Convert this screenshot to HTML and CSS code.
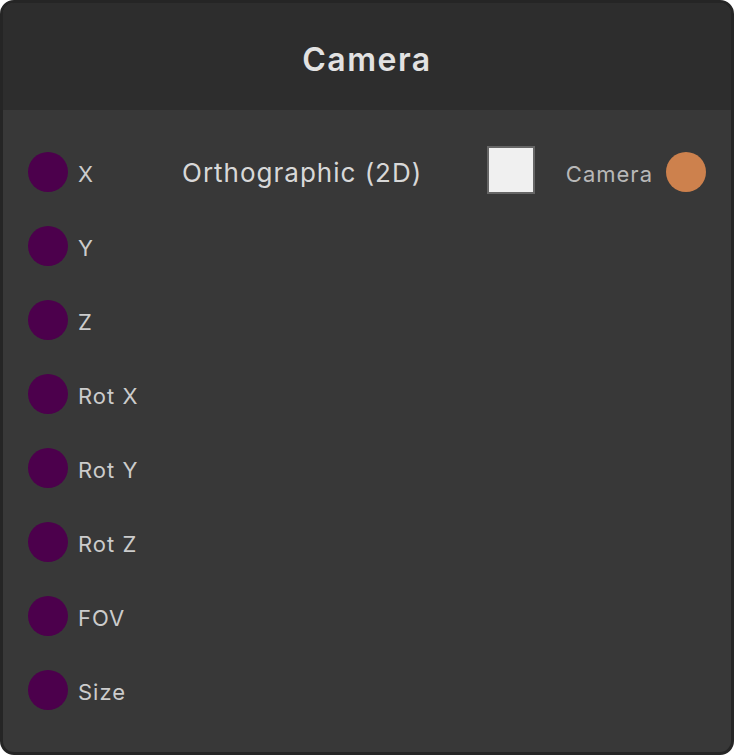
FILE: index.html
```html
<!DOCTYPE html>
<html lang="en">
<head>
    <meta charset="UTF-8">
    <meta name="viewport" content="width=device-width, initial-scale=1.0">
    <title>Camera Node</title>
    <link rel="stylesheet" href="styles.css">
</head>
<body>
    <div class="node">
        <div class="node-header">Camera</div>

        <div class="node-body">
            <div class="node-row">
                <div class="socket-in">
                    <span class="socket socket-float"></span>
                    <span class="socket-label">X</span>
                </div>
                <div class="node-property">
                    <span class="property-label">Orthographic (2D)</span>
                    <span class="checkbox"></span>
                </div>
                <div class="socket-out">
                    <span class="socket-label socket-label-out">Camera</span>
                    <span class="socket socket-camera"></span>
                </div>
            </div>

            <div class="node-row">
                <div class="socket-in">
                    <span class="socket socket-float"></span>
                    <span class="socket-label">Y</span>
                </div>
            </div>

            <div class="node-row">
                <div class="socket-in">
                    <span class="socket socket-float"></span>
                    <span class="socket-label">Z</span>
                </div>
            </div>

            <div class="node-row">
                <div class="socket-in">
                    <span class="socket socket-float"></span>
                    <span class="socket-label">Rot X</span>
                </div>
            </div>

            <div class="node-row">
                <div class="socket-in">
                    <span class="socket socket-float"></span>
                    <span class="socket-label">Rot Y</span>
                </div>
            </div>

            <div class="node-row">
                <div class="socket-in">
                    <span class="socket socket-float"></span>
                    <span class="socket-label">Rot Z</span>
                </div>
            </div>

            <div class="node-row">
                <div class="socket-in">
                    <span class="socket socket-float"></span>
                    <span class="socket-label">FOV</span>
                </div>
            </div>

            <div class="node-row">
                <div class="socket-in">
                    <span class="socket socket-float"></span>
                    <span class="socket-label">Size</span>
                </div>
            </div>
        </div>
    </div>
</body>
</html>
```

FILE: styles.css
```css
html, body {
    margin: 0;
    padding: 0;
    background-color: #ffffff;
}
body {
    font-family: Inter, "Noto Sans", sans-serif;
}
.node {
    box-sizing: border-box;
    width: 734px;
    height: 755px;
    border: 3px solid #252525;
    border-radius: 14px;
    background-color: #383838;
    overflow: hidden;
    display: flex;
    flex-direction: column;
}
.node-header {
    box-sizing: border-box;
    height: 107px;
    padding: 6px 0 0 0;
    display: flex;
    align-items: center;
    justify-content: center;
    background-color: #2d2d2d;
    color: #e2e2e2;
    font-size: 32px;
    font-weight: 600;
    letter-spacing: 1.5px;
}
.node-body {
    padding: 25px 25px 0 25px;
    display: flex;
    flex-direction: column;
}
.node-row {
    height: 74px;
    display: flex;
    align-items: center;
}
.socket-in {
    width: 154px;
    display: flex;
    align-items: center;
}
.socket {
    width: 40px;
    height: 40px;
    border-radius: 50%;
    flex-shrink: 0;
}
.socket-float {
    background-color: #4c004c;
}
.socket-camera {
    background-color: #cd814d;
}
.socket-label {
    margin-left: 10px;
    padding-top: 4px;
    font-size: 22px;
    letter-spacing: 1px;
    color: #cccccc;
}
.socket-label-out {
    margin-left: 0;
    margin-right: 13px;
    color: #b8b8b8;
}
.node-property {
    display: flex;
    align-items: center;
}
.property-label {
    font-size: 26px;
    letter-spacing: 1px;
    color: #d8d8d8;
    margin-right: 65px;
}
.checkbox {
    box-sizing: border-box;
    width: 48px;
    height: 48px;
    margin-bottom: 4px;
    border: 2px solid #666666;
    background-color: #f0f0f0;
}
.socket-out {
    margin-left: auto;
    display: flex;
    align-items: center;
}
```
